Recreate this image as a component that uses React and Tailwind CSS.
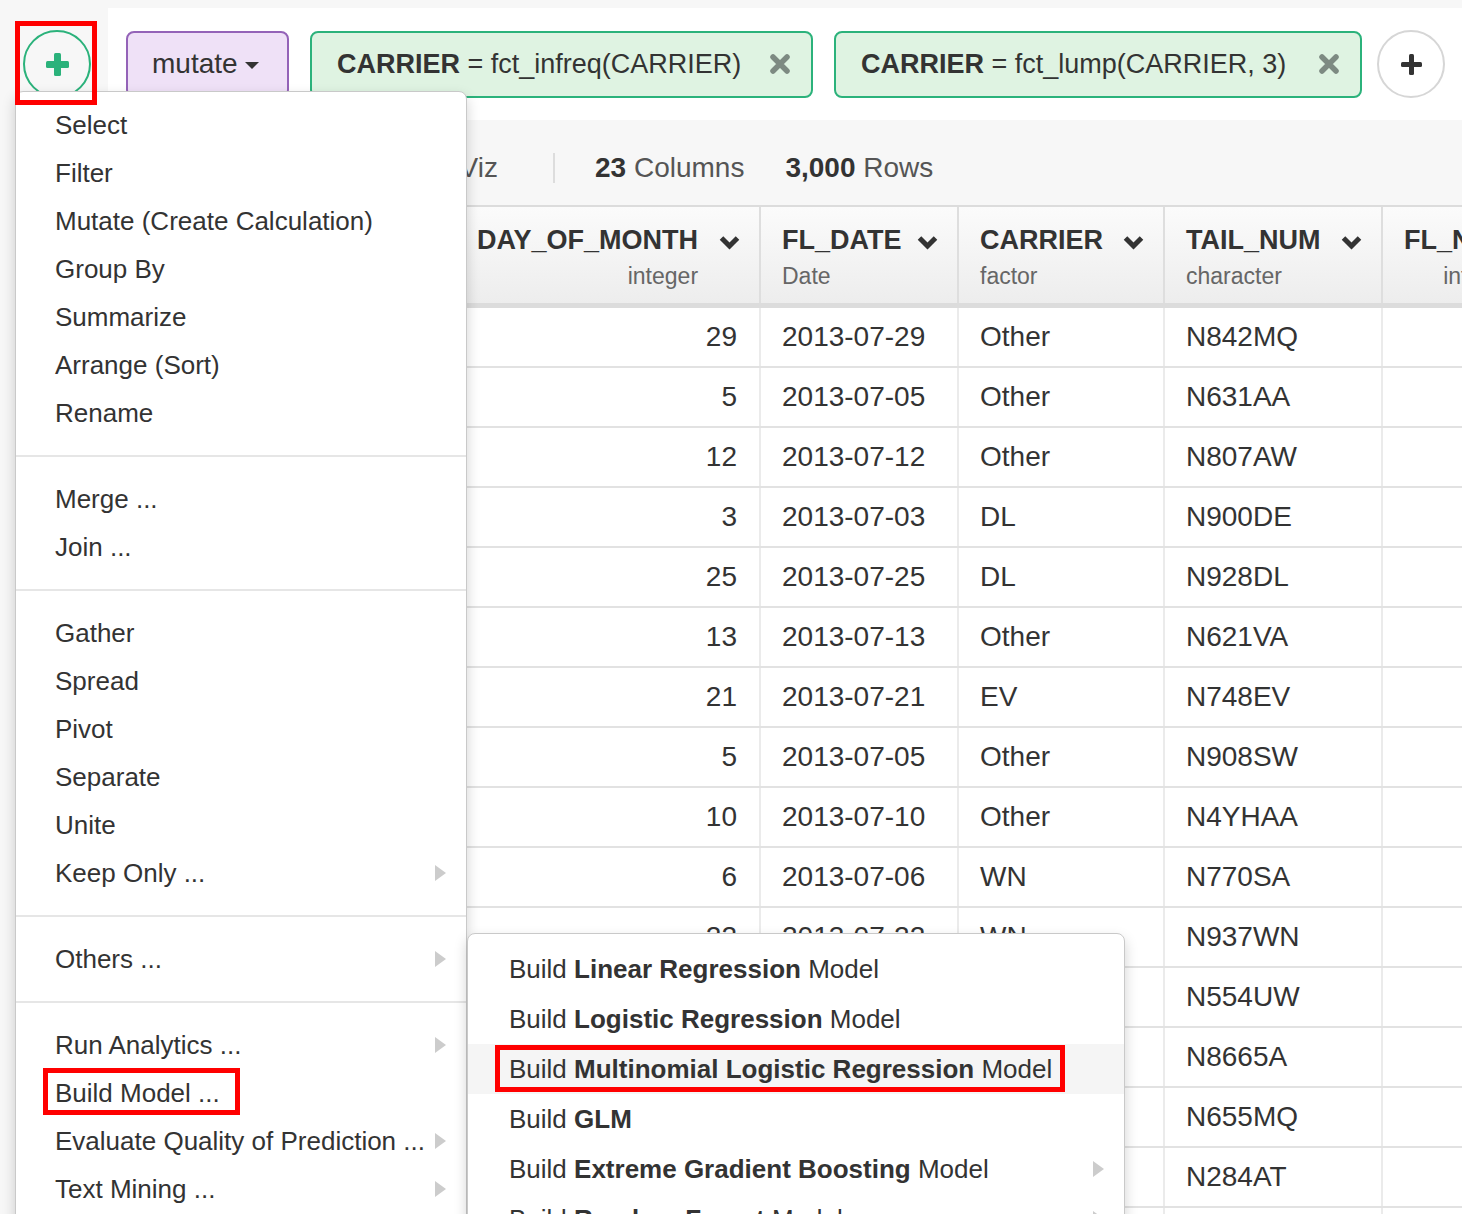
import React from "react";

const rows = [
  ["29", "2013-07-29", "Other", "N842MQ"],
  ["5", "2013-07-05", "Other", "N631AA"],
  ["12", "2013-07-12", "Other", "N807AW"],
  ["3", "2013-07-03", "DL", "N900DE"],
  ["25", "2013-07-25", "DL", "N928DL"],
  ["13", "2013-07-13", "Other", "N621VA"],
  ["21", "2013-07-21", "EV", "N748EV"],
  ["5", "2013-07-05", "Other", "N908SW"],
  ["10", "2013-07-10", "Other", "N4YHAA"],
  ["6", "2013-07-06", "WN", "N770SA"],
  ["22", "2013-07-22", "WN", "N937WN"],
  ["14", "2013-07-14", "Other", "N554UW"],
  ["8", "2013-07-08", "Other", "N8665A"],
  ["30", "2013-07-30", "Other", "N655MQ"],
  ["19", "2013-07-19", "Other", "N284AT"],
  ["2", "2013-07-02", "Other", "N3ANAA"],
];

function Plus({ color, size, thick }) {
  const off = (size - thick) / 2;
  return (
    <svg width={size} height={size} viewBox={`0 0 ${size} ${size}`}>
      <rect x="0" y={off} width={size} height={thick} rx="1.5" fill={color} />
      <rect x={off} y="0" width={thick} height={size} rx="1.5" fill={color} />
    </svg>
  );
}

function Times() {
  return (
    <svg width="22" height="22" viewBox="0 0 22 22">
      <path d="M4 4 L18 18 M18 4 L4 18" stroke="#7d8a82" strokeWidth="5.5" strokeLinecap="round" fill="none" />
    </svg>
  );
}

function Chevron() {
  return (
    <svg width="21" height="15" viewBox="0 0 21 15" className="shrink-0">
      <path d="M2.5 3 L10.5 11 L18.5 3" stroke="#333" strokeWidth="5" fill="none" />
    </svg>
  );
}

function Arrow() {
  return <div className="w-0 h-0 border-y-[8px] border-y-transparent border-l-[11px] border-l-[#cccccc]" />;
}

function Item({ children, arrow }) {
  return (
    <div className="h-[48px] flex items-center justify-between pl-[39px] pr-[20px] text-[26px] text-[#333] whitespace-nowrap">
      <span>{children}</span>
      {arrow && <Arrow />}
    </div>
  );
}

function Divider() {
  return <div className="h-[2px] bg-[#e6e6e6] my-[18px]" />;
}

function SubItem({ pre = "Build ", bold, post, arrow, active }) {
  return (
    <div className={`h-[50px] flex items-center justify-between pl-[41px] pr-[20px] text-[26px] text-[#333] whitespace-nowrap ${active ? "bg-[#f5f5f5]" : ""}`}>
      <span>
        {pre}
        <b className="font-bold">{bold}</b>
        {post}
      </span>
      {arrow && <Arrow />}
    </div>
  );
}

function HeadCell({ name, type, right, w, last }) {
  return (
    <div className={`${w} h-[96px] shrink-0 flex justify-between pl-[21px] pr-[19px] pt-[17px] ${last ? "" : "border-r-2 border-[#dedede]"}`}>
      <div className={`flex flex-col ${right ? "items-end" : "items-start"}`}>
        <div className="h-[32px] flex items-center text-[27px] font-bold text-[#333] whitespace-nowrap">{name}</div>
        <div className="h-[28px] mt-[6px] flex items-center text-[23px] text-[#666] whitespace-nowrap">{type}</div>
      </div>
      <div className="h-[32px] flex items-center pt-[4px]">
        <Chevron />
      </div>
    </div>
  );
}

function Cell({ w, children, right, last }) {
  return (
    <div
      className={`${w} h-full shrink-0 flex items-center text-[28px] text-[#333] whitespace-nowrap ${
        right ? "justify-end pr-[22px]" : "pl-[21px]"
      } ${last ? "" : "border-r-2 border-[#ebebeb]"}`}
    >
      {children}
    </div>
  );
}

export default function App() {
  return (
    <div className="relative w-[1462px] h-[1214px] overflow-hidden bg-[#f7f7f7] font-['Liberation_Sans',Arial,sans-serif] text-[#333]">
      {/* Top step bar */}
      <div className="flex pt-[8px]">
        <div className="w-[108px] h-[112px] shrink-0 flex items-center pl-[23px]">
          <div className="w-[68px] h-[68px] rounded-full border-2 border-[#2bb27b] flex items-center justify-center">
            <Plus color="#2bb27b" size={23} thick={7} />
          </div>
        </div>
        <div className="flex-1 h-[112px] bg-white flex items-center pl-[18px]">
          <div className="w-[163px] h-[67px] shrink-0 rounded-[8px] border-2 border-[#9463b8] bg-[#efe1f7] flex items-center pl-[24px] text-[28px] text-[#333]">
            <span>mutate</span>
            <div className="ml-[7px] mt-[2px] w-0 h-0 border-x-[7px] border-x-transparent border-t-[7px] border-t-[#333]" />
          </div>
          <div className="ml-[21px] w-[503px] h-[67px] shrink-0 rounded-[8px] border-2 border-[#2bb27b] bg-[#dff3e2] flex items-center justify-between pl-[25px] pr-[20px] text-[27px] text-[#333] whitespace-nowrap">
            <span>
              <b className="font-bold">CARRIER</b> = fct_infreq(CARRIER)
            </span>
            <Times />
          </div>
          <div className="ml-[21px] w-[528px] h-[67px] shrink-0 rounded-[8px] border-2 border-[#2bb27b] bg-[#dff3e2] flex items-center justify-between pl-[25px] pr-[20px] text-[27px] text-[#333] whitespace-nowrap">
            <span>
              <b className="font-bold">CARRIER</b> = fct_lump(CARRIER, 3)
            </span>
            <Times />
          </div>
          <div className="ml-[15px] w-[68px] h-[68px] shrink-0 rounded-full border-2 border-[#d6d6d6] bg-white flex items-center justify-center">
            <Plus color="#333" size={21} thick={5} />
          </div>
        </div>
      </div>

      {/* Summary bar */}
      <div className="h-[85px] pt-[11px] pl-[108px] flex items-center text-[28px] whitespace-nowrap">
        <div className="w-[390px] flex justify-end gap-[40px] text-[#555]">
          <span>Table</span>
          <span>Summary</span>
          <span>Viz</span>
        </div>
        <div className="ml-[55px] w-[2px] h-[30px] bg-[#dddddd]" />
        <div className="ml-[40px] text-[#555]">
          <b className="font-bold text-[#333]">23</b> Columns
        </div>
        <div className="ml-[41px] text-[#555]">
          <b className="font-bold text-[#333]">3,000</b> Rows
        </div>
      </div>

      {/* Table */}
      <div className="ml-[108px] bg-white">
        <div className="flex border-t-2 border-b-[5px] border-[#dcdcdc] bg-gradient-to-b from-[#fbfbfb] to-[#ededed]">
          <div className="w-[348px] h-[96px] shrink-0 border-r-2 border-[#dedede]" />
          <HeadCell w="w-[305px]" name="DAY_OF_MONTH" type="integer" right />
          <HeadCell w="w-[198px]" name="FL_DATE" type="Date" />
          <HeadCell w="w-[206px]" name="CARRIER" type="factor" />
          <HeadCell w="w-[218px]" name="TAIL_NUM" type="character" />
          <HeadCell w="w-[300px]" name="FL_NUM" type="integer" right last />
        </div>
        {rows.map((r, i) => (
          <div key={i} className="flex h-[60px] border-b-2 border-[#e2e2e2]">
            <Cell w="w-[348px]" />
            <Cell w="w-[305px]" right>{r[0]}</Cell>
            <Cell w="w-[198px]">{r[1]}</Cell>
            <Cell w="w-[206px]">{r[2]}</Cell>
            <Cell w="w-[218px]">{r[3]}</Cell>
            <Cell w="w-[300px]" last />
          </div>
        ))}
      </div>

      {/* Main dropdown menu */}
      <div className="absolute left-[15px] top-[91px] w-[452px] h-[1200px] bg-white border border-[#c9c9c9] rounded-[8px] shadow-[0_6px_14px_rgba(0,0,0,0.18)] pt-[9px]">
        <Item>Select</Item>
        <Item>Filter</Item>
        <Item>Mutate (Create Calculation)</Item>
        <Item>Group By</Item>
        <Item>Summarize</Item>
        <Item>Arrange (Sort)</Item>
        <Item>Rename</Item>
        <Divider />
        <Item>Merge ...</Item>
        <Item>Join ...</Item>
        <Divider />
        <Item>Gather</Item>
        <Item>Spread</Item>
        <Item>Pivot</Item>
        <Item>Separate</Item>
        <Item>Unite</Item>
        <Item arrow>Keep Only ...</Item>
        <Divider />
        <Item arrow>Others ...</Item>
        <Divider />
        <Item arrow>Run Analytics ...</Item>
        <Item>Build Model ...</Item>
        <Item arrow>Evaluate Quality of Prediction ...</Item>
        <Item arrow>Text Mining ...</Item>
      </div>

      {/* Sub menu */}
      <div className="absolute left-[467px] top-[933px] w-[658px] h-[400px] bg-white border border-[#c9c9c9] rounded-[8px] shadow-[0_6px_14px_rgba(0,0,0,0.18)] pt-[10px]">
        <SubItem bold="Linear Regression" post=" Model" />
        <SubItem bold="Logistic Regression" post=" Model" />
        <SubItem bold="Multinomial Logistic Regression" post=" Model" active />
        <SubItem bold="GLM" />
        <SubItem bold="Extreme Gradient Boosting" post=" Model" arrow />
        <SubItem bold="Random Forest" post=" Model" arrow />
      </div>

      {/* Red highlight boxes */}
      <div className="absolute left-[15px] top-[21px] w-[82px] h-[84px] border-[5px] border-[#ff0000]" />
      <div className="absolute left-[43px] top-[1068px] w-[197px] h-[47px] border-[5px] border-[#ff0000]" />
      <div className="absolute left-[495px] top-[1045px] w-[570px] h-[47px] border-[5px] border-[#ff0000]" />
    </div>
  );
}
